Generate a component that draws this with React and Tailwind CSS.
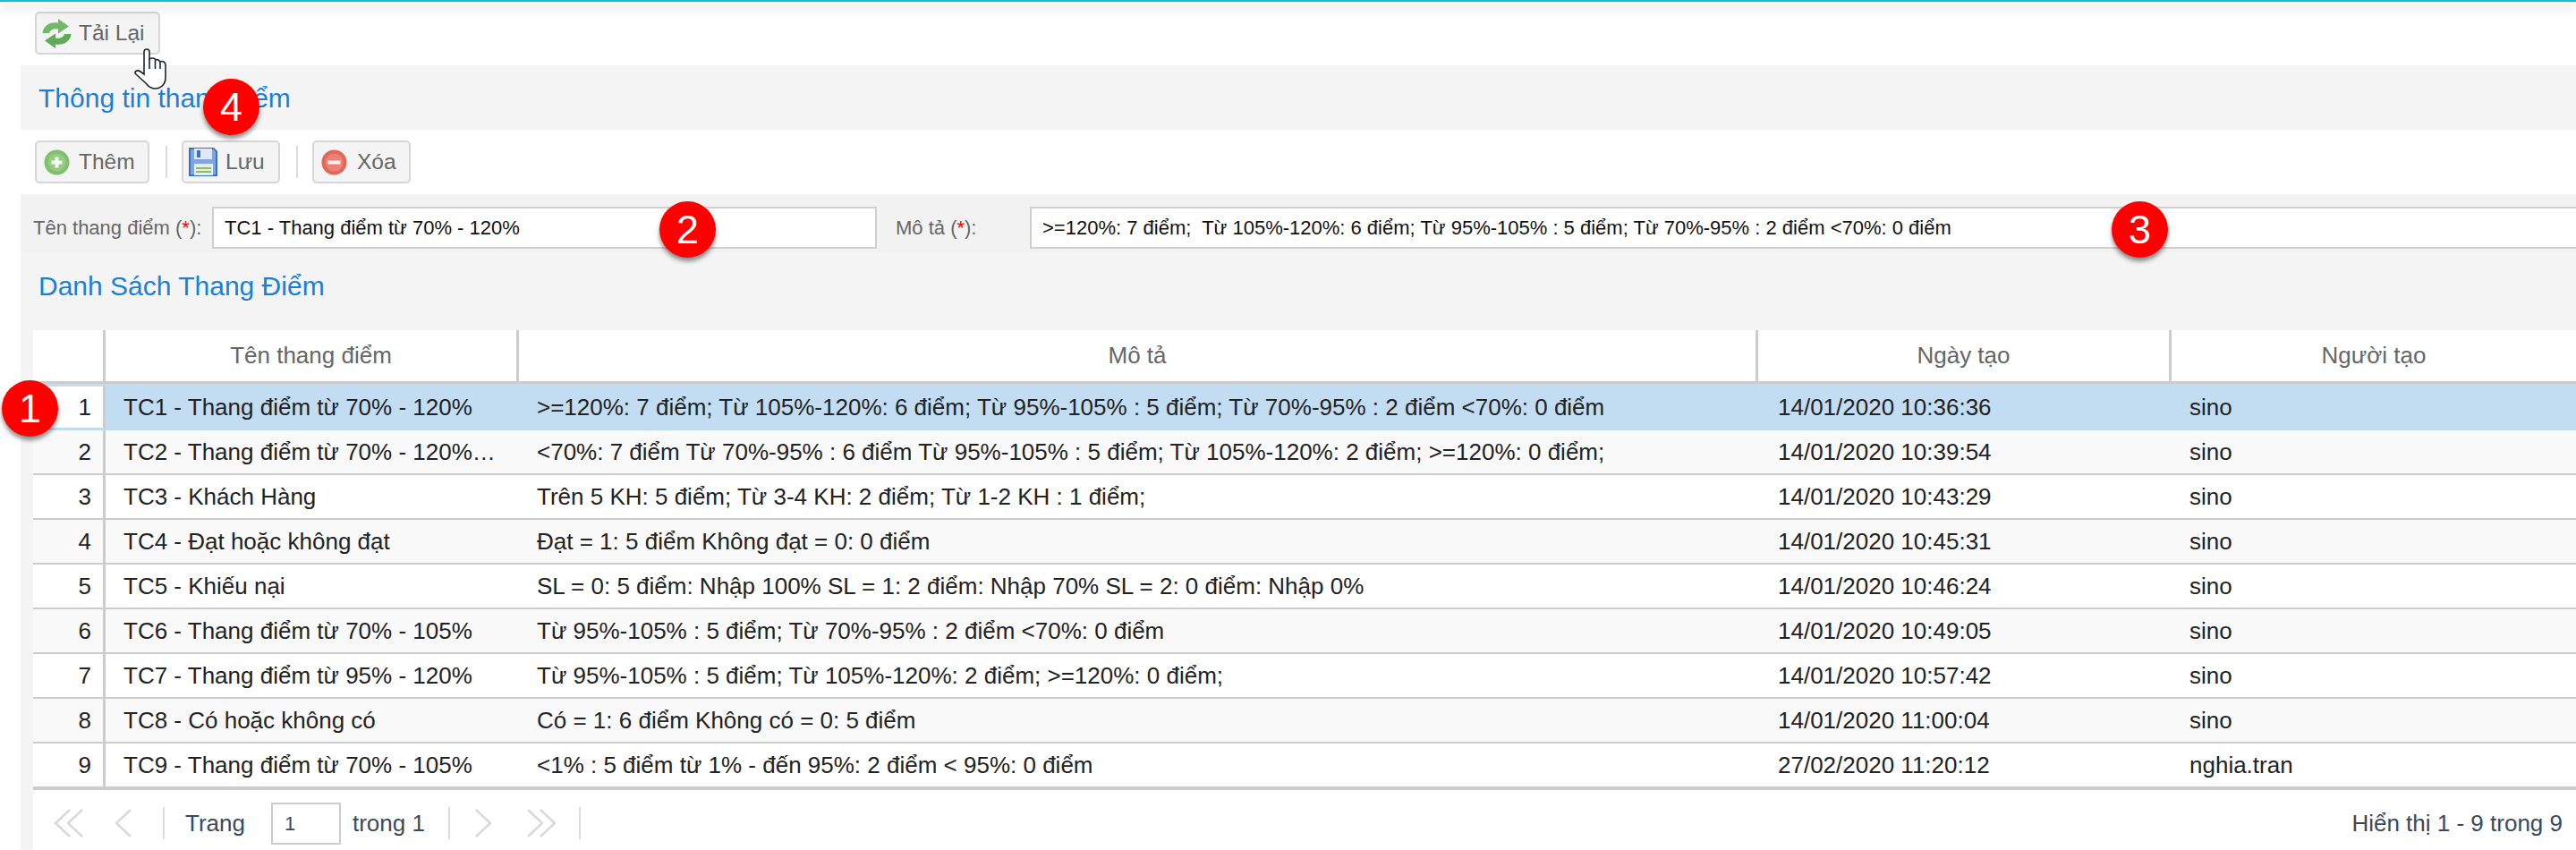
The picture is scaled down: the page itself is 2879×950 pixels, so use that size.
import React from "react";

const rows = [
  ["TC1 - Thang điểm từ 70% - 120%", ">=120%: 7 điểm; Từ 105%-120%: 6 điểm; Từ 95%-105% : 5 điểm; Từ 70%-95% : 2 điểm <70%: 0 điểm", "14/01/2020 10:36:36", "sino"],
  ["TC2 - Thang điểm từ 70% - 120%…", "<70%: 7 điểm Từ 70%-95% : 6 điểm Từ 95%-105% : 5 điểm; Từ 105%-120%: 2 điểm; >=120%: 0 điểm;", "14/01/2020 10:39:54", "sino"],
  ["TC3 - Khách Hàng", "Trên 5 KH: 5 điểm; Từ 3-4 KH: 2 điểm; Từ 1-2 KH : 1 điểm;", "14/01/2020 10:43:29", "sino"],
  ["TC4 - Đạt hoặc không đạt", "Đạt = 1: 5 điểm Không đạt = 0: 0 điểm", "14/01/2020 10:45:31", "sino"],
  ["TC5 - Khiếu nại", "SL = 0: 5 điểm: Nhập 100% SL = 1: 2 điểm: Nhập 70% SL = 2: 0 điểm: Nhập 0%", "14/01/2020 10:46:24", "sino"],
  ["TC6 - Thang điểm từ 70% - 105%", "Từ 95%-105% : 5 điểm; Từ 70%-95% : 2 điểm <70%: 0 điểm", "14/01/2020 10:49:05", "sino"],
  ["TC7 - Thang điểm từ 95% - 120%", "Từ 95%-105% : 5 điểm; Từ 105%-120%: 2 điểm; >=120%: 0 điểm;", "14/01/2020 10:57:42", "sino"],
  ["TC8 - Có hoặc không có", "Có = 1: 6 điểm Không có = 0: 5 điểm", "14/01/2020 11:00:04", "sino"],
  ["TC9 - Thang điểm từ 70% - 105%", "<1% : 5 điểm từ 1% - đến 95%: 2 điểm < 95%: 0 điểm", "27/02/2020 11:20:12", "nghia.tran"],
];

function RefreshIcon() {
  return (
    <svg width="33" height="33" viewBox="0 0 33 33" className="shrink-0">
      <path d="M0.5 16 C1 8 9 3 18 4.5 L18 0 L30 8.5 L18 16.5 L18 11.5 C13 10.5 9 12.5 8 16 Z" fill="#6fb968" />
      <path d="M32.5 17 C32 25 24 30 15 28.5 L15 33 L3 24.5 L15 16.5 L15 21.5 C20 22.5 24 20.5 25 17 Z" fill="#5dac58" />
    </svg>
  );
}

function PlusIcon() {
  return (
    <svg width="29" height="29" viewBox="0 0 29 29" className="shrink-0">
      <circle cx="14.5" cy="14.5" r="14" fill="#7fbf6e" />
      <circle cx="14.5" cy="14.5" r="10" fill="#93cc82" />
      <path d="M14.5 8.5 V20.5 M8.5 14.5 H20.5" stroke="#f4fbf2" strokeWidth="4" />
    </svg>
  );
}

function MinusIcon() {
  return (
    <svg width="29" height="29" viewBox="0 0 29 29" className="shrink-0">
      <circle cx="14.5" cy="14.5" r="14" fill="#e2685b" />
      <circle cx="14.5" cy="14.5" r="10" fill="#ee8076" />
      <path d="M7.5 14.5 H21.5" stroke="#fdf3f1" strokeWidth="4" />
    </svg>
  );
}

function SaveIcon() {
  return (
    <svg width="32" height="32" viewBox="0 0 32 32" className="shrink-0">
      <path d="M0 0 H28 L32 4 V32 H0 Z" fill="#3f70bd" />
      <path d="M2 2 H28 L30 5 V30 H2 Z" fill="#7ea7e2" />
      <rect x="6" y="1" width="20" height="12" fill="#dfe8f6" />
      <rect x="9" y="3" width="4" height="8" fill="#3f70bd" />
      <rect x="6" y="18" width="21" height="13" fill="#e6efe0" />
      <rect x="8" y="22" width="17" height="2" fill="#8dbb6b" />
      <rect x="8" y="26" width="17" height="2" fill="#8dbb6b" />
    </svg>
  );
}

function Hand() {
  return (
    <svg width="60" height="60" viewBox="0 0 60 60" className="absolute left-[140px] top-[45px]">
      <path
        d="M21 13 Q21 10 24 10 Q27 10 27 13 V21 Q28 20 31 20 Q33 20 34 22 Q35 21 37 22 Q38 23 39 24 Q41 23 43 24 Q45 25 45 28 V42 Q45 50 38 53 Q33 55 29 53 Q26 52 23 48 L12 38 Q10 36 12 34.5 Q14 33 17 35 L21 38 Z"
        fill="#fff"
        stroke="#1d2430"
        strokeWidth="1.6"
      />
      <path d="M27 21 V32 M33.5 22 V32 M39 24 V32" stroke="#1d2430" strokeWidth="1.6" fill="none" />
    </svg>
  );
}

function Badge({ n, className }) {
  return (
    <div className={"absolute flex h-[63px] w-[63px] items-center justify-center rounded-full bg-[#ff0000] text-[45px] leading-none text-white shadow-[0_4px_5px_rgba(0,0,0,0.45)] " + className}>
      {n}
    </div>
  );
}

function Btn({ icon, label, className }) {
  return (
    <button className={"flex h-[48px] items-center rounded-[5px] border-2 border-[#d6d6d6] bg-[#f4f4f4] text-[24.5px] text-[#666] " + className}>
      {icon}
      <span>{label}</span>
    </button>
  );
}

function Chevron({ double, left, className }) {
  const d = left ? (double ? "M18 1 L2 16 L18 31" : "M20 1 L4 16 L20 31") : "M2 1 L18 16 L2 31";
  return (
    <svg width={double ? 34 : 22} height="33" viewBox={double ? "0 0 34 33" : "0 0 22 33"} fill="none" stroke="#d9d9d9" strokeWidth="2.5" className={className}>
      <path d={d} />
      {double && <path d={left ? "M32 1 L16 16 L32 31" : "M16 1 L32 16 L16 31"} />}
    </svg>
  );
}

const Sep = ({ className }) => <div className={"h-[36px] w-[2px] bg-[#dcdcdc] " + className} />;

export default function App() {
  return (
    <div className="relative h-[950px] w-[2879px] overflow-hidden bg-white font-['Liberation_Sans',Arial,sans-serif]">
      <div className="relative z-10 h-[2px] bg-[#17bcd6] shadow-[0_5px_14px_rgba(0,0,0,0.38)]" />
      <div className="ml-[23px]">
        <div className="h-[71px] pl-4 pt-[11px]">
          <Btn icon={<RefreshIcon />} label="Tải Lại" className="w-[140px] gap-[8px] pl-[6px]" />
        </div>

        <div className="flex h-[72px] items-center bg-[#f4f4f4] pl-5 text-[30px] text-[#1c7fd4]">Thông tin thang điểm</div>

        <div className="flex h-[72px] items-center pl-4">
          <Btn icon={<PlusIcon />} label="Thêm" className="w-[128px] gap-[10px] pl-[8px]" />
          <Sep className="ml-[18px] mr-[16px]" />
          <Btn icon={<SaveIcon />} label="Lưu" className="w-[110px] gap-[9px] pl-[6px]" />
          <Sep className="ml-[18px] mr-[16px]" />
          <Btn icon={<MinusIcon />} label="Xóa" className="w-[110px] gap-[11px] pl-[8px]" />
        </div>

        <div className="h-[152px] bg-[#f4f4f4]">
          <div className="flex h-[66px] items-start bg-[#f2f2f2] pt-[14px] text-[22px]">
            <label className="flex h-[47px] w-[214px] items-center pl-[14px] text-[#666]">
              <span>Tên thang điểm (<span className="text-[#f00]">*</span>):</span>
            </label>
            <div className="flex h-[47px] w-[743px] items-center border-2 border-[#cfcfcf] bg-white pl-3 text-[#111]">TC1 - Thang điểm từ 70% - 120%</div>
            <label className="flex h-[47px] w-[171px] items-center pl-[21px] text-[#666]">
              <span>Mô tả (<span className="text-[#f00]">*</span>):</span>
            </label>
            <div className="flex h-[47px] flex-1 items-center whitespace-pre border-y-2 border-l-2 border-[#cfcfcf] bg-white pl-3 text-[#111]">{">=120%: 7 điểm;  Từ 105%-120%: 6 điểm; Từ 95%-105% : 5 điểm; Từ 70%-95% : 2 điểm <70%: 0 điểm"}</div>
          </div>
          <div className="flex h-[72px] items-center pl-5 text-[30px] text-[#1c7fd4]">Danh Sách Thang Điểm</div>
        </div>

        <div className="flex">
          <div className="w-[14px] shrink-0 bg-[#f4f4f4]" />
          <div className="flex-1">
            <table className="w-[2842px] table-fixed border-separate border-spacing-0 text-[26px] text-[#222]">
              <colgroup>
                <col className="w-[81px]" />
                <col className="w-[462px]" />
                <col className="w-[1385px]" />
                <col className="w-[462px]" />
                <col />
              </colgroup>
              <thead>
                <tr className="h-[60px] text-[#666]">
                  <th className="border-b-[3px] border-r-[3px] border-[#ccc] font-normal" />
                  <th className="border-b-[3px] border-r-[3px] border-[#ccc] font-normal">Tên thang điểm</th>
                  <th className="border-b-[3px] border-r-[3px] border-[#ccc] font-normal">Mô tả</th>
                  <th className="border-b-[3px] border-r-[3px] border-[#ccc] font-normal">Ngày tạo</th>
                  <th className="border-b-[3px] border-[#ccc] font-normal">Người tạo</th>
                </tr>
              </thead>
              <tbody>
                {rows.map((r, i) => {
                  const selected = i === 0;
                  const last = i === rows.length - 1;
                  const bg = selected ? "bg-[#c2dcf2]" : i % 2 === 1 ? "bg-[#f9f9f9]" : "bg-white";
                  const border = selected ? "" : last ? "border-b-4 border-[#ccc]" : "border-b-2 border-[#ccc]";
                  return (
                    <tr key={i} className={selected || last ? "h-[52px]" : "h-[50px]"}>
                      <td className={"border-r-[3px] pr-[13px] pt-[1px] text-right " + (selected ? "border-y-[3px] border-y-[#c2dcf2] border-r-[#ccc] bg-white" : bg + " border-r-[#ccc] " + border)}>{i + 1}</td>
                      <td className={"whitespace-nowrap pl-[20px] pt-[1px] " + bg + " " + border}>{r[0]}</td>
                      <td className={"whitespace-nowrap pl-[20px] pt-[1px] " + bg + " " + border}>{r[1]}</td>
                      <td className={"whitespace-nowrap pl-[22px] pt-[1px] " + bg + " " + border}>{r[2]}</td>
                      <td className={"whitespace-nowrap pl-[20px] pt-[1px] " + bg + " " + border}>{r[3]}</td>
                    </tr>
                  );
                })}
              </tbody>
            </table>

            <div className="flex h-[67px] items-center pt-[7px] text-[26px] text-[#3a4a5c]">
              <Chevron double left className="ml-[23px]" />
              <Chevron left className="ml-[32px]" />
              <Sep className="ml-[34px]" />
              <span className="ml-[23px]">Trang</span>
              <div className="ml-[29px] flex h-[47px] w-[78px] items-center border-2 border-[#ccc] pl-[13px] text-[22px]">1</div>
              <span className="ml-[13px]">trong 1</span>
              <Sep className="ml-[26px]" />
              <Chevron className="ml-[27px]" />
              <Chevron double className="ml-[36px]" />
              <Sep className="ml-[25px]" />
              <span className="ml-auto mr-[15px]">Hiển thị 1 - 9 trong 9</span>
            </div>
          </div>
        </div>
      </div>

      <Hand />
      <Badge n="4" className="left-[227px] top-[88px]" />
      <Badge n="2" className="left-[737px] top-[225px]" />
      <Badge n="3" className="left-[2360px] top-[225px]" />
      <Badge n="1" className="left-[2px] top-[425px]" />
    </div>
  );
}
